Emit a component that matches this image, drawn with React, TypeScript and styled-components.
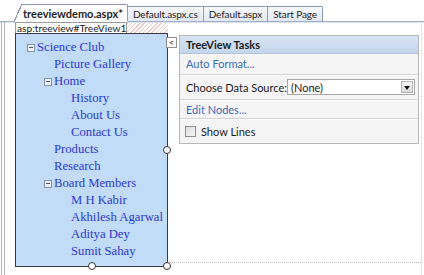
import React from "react";
import styled, { createGlobalStyle } from "styled-components";

const GlobalStyle = createGlobalStyle`
  html, body { margin: 0; padding: 0; background: #fff; }
  body { width: 424px; height: 275px; overflow: hidden; font-family: Lato, "Open Sans", sans-serif; }
`;

const Page = styled.div`
  width: 424px;
  height: 275px;
  display: flex;
  flex-direction: column;
  background: #fff;
  overflow: hidden;
`;

const TabStrip = styled.div`
  height: 22px;
  box-sizing: border-box;
  display: flex;
  align-items: flex-end;
  padding-left: 22px;
  border-bottom: 1px solid #9fb0c7;
  box-shadow: 0 1px 0 #dfe5ee;
`;

const Tab = styled.div<{ $active?: boolean }>`
  position: relative;
  box-sizing: border-box;
  height: ${(p) => (p.$active ? 18 : 16)}px;
  margin-bottom: -1px;
  padding: 0 ${(p) => (p.$active ? 4 : 5)}px 0 ${(p) => (p.$active ? 1 : 5)}px;
  display: flex;
  align-items: center;
  font-size: ${(p) => (p.$active ? 11 : 10)}px;
  letter-spacing: ${(p) => (p.$active ? 0 : -0.1)}px;
  font-weight: ${(p) => (p.$active ? 700 : 400)};
  color: #1e1e1e;
  white-space: nowrap;
  background: ${(p) => (p.$active ? "#fff" : "linear-gradient(#f6f8fb, #e3e8f0)")};
  border: 1px solid #8d9cb3;
  border-left: ${(p) => (p.$active ? "none" : "1px solid #8d9cb3")};
  border-bottom: ${(p) => (p.$active ? "1px solid #fff" : "1px solid #9fb0c7")};
  border-top-right-radius: 2px;
  z-index: ${(p) => (p.$active ? 2 : 1)};
  margin-left: ${(p) => (p.$active ? 0 : -1)}px;

  ${(p) =>
    p.$active &&
    `
    &::before {
      content: "";
      position: absolute;
      left: -8px;
      top: -1px;
      width: 8px;
      bottom: -1px;
      background: linear-gradient(to top left, #fff calc(50% - 0.5px), #8d9cb3 calc(50% - 0.5px), #8d9cb3 calc(50% + 0.7px), transparent calc(50% + 0.7px));
    }
  `}
`;

const Surface = styled.div`
  flex: 1;
  display: flex;
  margin-left: 1px;
  border-left: 4px double #b4b4b4;
  border-right: 1px solid #e6e6e6;
  margin-right: 2px;
  padding-left: 10px;
`;

const Designer = styled.div`
  width: 153px;
  display: flex;
  flex-direction: column;
`;

const LabelRow = styled.div`
  height: 11px;
  display: flex;
`;

const ControlLabel = styled.div`
  box-sizing: border-box;
  width: 112px;
  height: 12px;
  border: 1px solid #9c9c9c;
  border-bottom: none;
  background: #fff;
  font-size: 10.2px;
  line-height: 10px;
  padding-left: 1px;
  color: #222;
  white-space: nowrap;
  overflow: hidden;
`;

const Hatch = styled.div`
  flex: 1;
  height: 11px;
  margin-top: 1px;
  background: repeating-linear-gradient(135deg, #f1c9c9 0 1px, #fff 1px 3px);
`;

const TreeBox = styled.div`
  position: relative;
  box-sizing: border-box;
  height: 234px;
  border: 1px solid #3a3a3a;
  background: #c2dbf7;
  padding-top: 5px;
`;

const Row = styled.div<{ $pad: number }>`
  height: 17px;
  display: flex;
  align-items: center;
  padding-left: ${(p) => p.$pad}px;
  font-family: "Liberation Serif", "Times New Roman", serif;
  font-size: 12.7px;
  color: #2a3acb;
  white-space: nowrap;
`;

const Expander = styled.span`
  box-sizing: border-box;
  width: 8px;
  height: 8px;
  margin-right: 2px;
  border: 1px solid #8293a8;
  background: #eef2f7;
  position: relative;
  &::after {
    content: "";
    position: absolute;
    left: 1px;
    right: 1px;
    top: 2.5px;
    height: 1px;
    background: #4a5666;
  }
`;

const Handle = styled.span<{ $x: string; $y: string }>`
  position: absolute;
  width: 6px;
  height: 6px;
  border-radius: 50%;
  border: 1px solid #333;
  background: #fff;
  left: ${(p) => p.$x};
  top: ${(p) => p.$y};
  transform: translate(-50%, -50%);
`;

const RightArea = styled.div`
  flex: 1;
  box-sizing: border-box;
  height: 241px;
  border-bottom: 1px dotted #c4c4c4;
  padding-top: 13px;
  display: flex;
  align-items: flex-start;
`;

const CollapseButton = styled.div`
  box-sizing: border-box;
  width: 11px;
  height: 11px;
  margin-left: -2px;
  margin-top: 2px;
  margin-right: 2px;
  border: 1px solid #8f8f8f;
  background: #fff;
  font-size: 9px;
  line-height: 9px;
  text-align: center;
  color: #222;
  z-index: 1;
`;

const Panel = styled.div`
  box-sizing: border-box;
  width: 240px;
  height: 109px;
  border: 1px solid #b9b9b9;
  background: #f5f5f5;
  display: flex;
  flex-direction: column;
`;

const PanelHeader = styled.div`
  height: 17px;
  display: flex;
  align-items: center;
  padding-left: 6px;
  font-size: 11px;
  font-weight: 700;
  color: #1b1b1b;
  background: linear-gradient(#d6e4f4, #c3d6ec);
  border-bottom: 1px solid #b3c3d8;
`;

const PanelRow = styled.div<{ $h: number; $last?: boolean }>`
  height: ${(p) => p.$h}px;
  display: flex;
  align-items: center;
  padding-left: 6px;
  font-size: 11px;
  color: #1b1b1b;
  white-space: nowrap;
  border-bottom: ${(p) => (p.$last ? "none" : "1px solid #d4d4d4")};
  box-shadow: ${(p) => (p.$last ? "none" : "0 1px 0 #fbfbfb")};
`;

const Link = styled.span`
  color: #3b6cb3;
`;

const FieldLabel = styled.span`
  width: 101px;
`;

const Select = styled.div`
  box-sizing: border-box;
  width: 128px;
  height: 16px;
  border: 1px solid #a9a9a9;
  background: #fff;
  display: flex;
  align-items: center;
  padding-left: 3px;
  font-size: 11px;
  justify-content: space-between;
  padding-right: 1px;
`;

const DropButton = styled.span`
  box-sizing: border-box;
  width: 12px;
  height: 12px;
  border: 1px solid #b5b5b5;
  background: linear-gradient(#f4f4f4, #dadada);
  display: flex;
  align-items: center;
  justify-content: center;
  &::after {
    content: "";
    border-left: 3.5px solid transparent;
    border-right: 3.5px solid transparent;
    border-top: 4px solid #111;
    margin-top: 1px;
  }
`;

const Checkbox = styled.span`
  box-sizing: border-box;
  width: 11px;
  height: 11px;
  margin-left: -1px;
  margin-right: 5px;
  border: 1px solid #8e8e8e;
  background: linear-gradient(135deg, #dcdcdc, #f7f7f7);
`;

type Node = { label: string; level: number; expanded?: boolean };

const nodes: Node[] = [
  { label: "Science Club", level: 0, expanded: true },
  { label: "Picture Gallery", level: 1 },
  { label: "Home", level: 1, expanded: true },
  { label: "History", level: 2 },
  { label: "About Us", level: 2 },
  { label: "Contact Us", level: 2 },
  { label: "Products", level: 1 },
  { label: "Research", level: 1 },
  { label: "Board Members", level: 1, expanded: true },
  { label: "M H Kabir", level: 2 },
  { label: "Akhilesh Agarwal", level: 2 },
  { label: "Aditya Dey", level: 2 },
  { label: "Sumit Sahay", level: 2 },
];

export default function App() {
  return (
    <Page>
      <GlobalStyle />
      <TabStrip>
        <Tab $active>treeviewdemo.aspx*</Tab>
        <Tab>Default.aspx.cs</Tab>
        <Tab>Default.aspx</Tab>
        <Tab>Start Page</Tab>
      </TabStrip>
      <Surface>
        <Designer>
          <LabelRow>
            <ControlLabel>asp:treeview#TreeView1</ControlLabel>
            <Hatch />
          </LabelRow>
          <TreeBox>
            {nodes.map((n) => (
              <Row key={n.label} $pad={11 + n.level * 17 + (n.expanded ? 0 : 10)}>
                {n.expanded && <Expander />}
                {n.label}
              </Row>
            ))}
            <Handle $x="100%" $y="50%" />
            <Handle $x="50%" $y="100%" />
            <Handle $x="100%" $y="100%" />
          </TreeBox>
        </Designer>
        <RightArea>
          <CollapseButton>&lt;</CollapseButton>
          <Panel>
            <PanelHeader>TreeView Tasks</PanelHeader>
            <PanelRow $h={20}>
              <Link>Auto Format...</Link>
            </PanelRow>
            <PanelRow $h={25}>
              <FieldLabel>Choose Data Source:</FieldLabel>
              <Select>
                (None)
                <DropButton />
              </Select>
            </PanelRow>
            <PanelRow $h={18}>
              <Link>Edit Nodes...</Link>
            </PanelRow>
            <PanelRow $h={24} $last>
              <Checkbox />
              Show Lines
            </PanelRow>
          </Panel>
        </RightArea>
      </Surface>
    </Page>
  );
}
